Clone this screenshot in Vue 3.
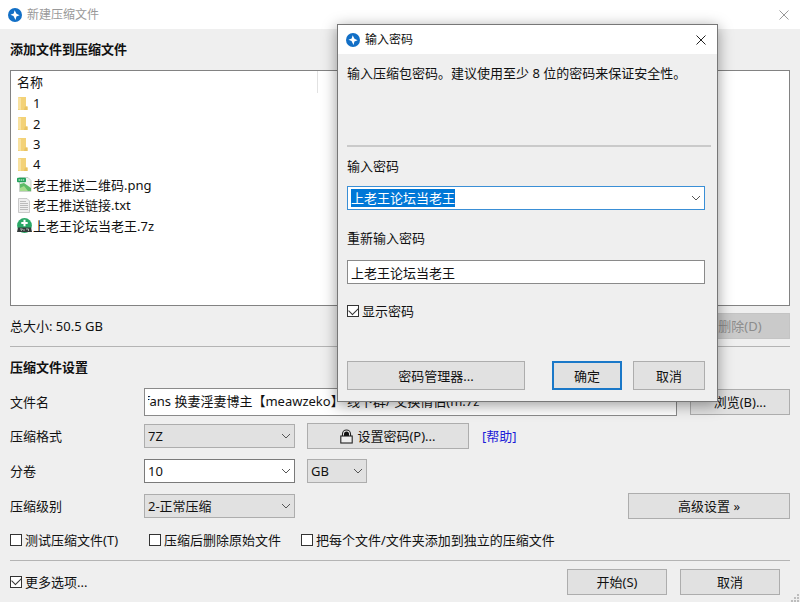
<script setup>
import { onMounted, ref } from 'vue'

const files = [
  { name: '1', kind: 'folder' },
  { name: '2', kind: 'folder' },
  { name: '3', kind: 'folder' },
  { name: '4', kind: 'folder' },
  { name: '老王推送二维码.png', kind: 'image' },
  { name: '老王推送链接.txt', kind: 'text' },
  { name: '上老王论坛当老王.7z', kind: 'archive' },
]

const fileName = ref('fans 换妻淫妻博主【meawzeko】 线下群/ 交换情侣(m.7z')
const volume = ref('10')
const password = ref('上老王论坛当老王')
const passwordAgain = ref('上老王论坛当老王')
const showPassword = ref(true)
const moreOptions = ref(true)
const passwordInput = ref(null)

onMounted(() => {
  passwordInput.value.focus()
  passwordInput.value.select()
})
</script>

<template>
  <div class="window">
    <header class="titlebar">
      <svg class="logo" viewBox="0 0 16 16" aria-hidden="true">
        <circle cx="8" cy="8" r="8" fill="#126fc6" />
        <path d="M7.600 2.500 6.500 6.300 2.800 7.600l3.500 1.600 2.300 4.500 1-4 3.700-1.500-3.600-1.700z" fill="#fff" />
      </svg>
      <span class="title">新建压缩文件</span>
      <button class="close" type="button" aria-label="关闭">
        <svg viewBox="0 0 10 10"><path d="M.5.5l9 9M9.5.5l-9 9" /></svg>
      </button>
    </header>

    <main class="content">
      <h2>添加文件到压缩文件</h2>
      <div class="list">
        <table>
          <thead>
            <tr><th>名称</th></tr>
          </thead>
          <tbody>
            <tr v-for="file in files" :key="file.name">
              <td>
                <div class="file">
                  <svg v-if="file.kind === 'folder'" viewBox="0 0 15 15" aria-hidden="true">
                    <path d="M1 1h8v9.500h1.500V14H1z" fill="#f3d278" />
                    <path d="M1 1l3 1.200V14l-3-1z" fill="#f9e2a0" />
                    <path d="M8 10.500h2.500V14H7z" fill="#e9c364" />
                  </svg>
                  <svg v-else-if="file.kind === 'image'" viewBox="0 0 15 15" aria-hidden="true">
                    <path d="M2.500.5h8.500l3 3v11H2.500z" fill="#eef3ee" stroke="#b6c2b8" stroke-width=".7" />
                    <path d="M3 7l4-1 7 5v3H3z" fill="#5dbb67" />
                    <path d="M3 11l4-2 4 5H3z" fill="#a5dc8d" />
                    <rect x="0" y=".7" width="9" height="4.600" rx="1" fill="#22a15a" />
                    <path d="M1.500 3h6" stroke="#a8e2bd" stroke-width="1.300" stroke-dasharray="1.500 .6" />
                  </svg>
                  <svg v-else-if="file.kind === 'text'" viewBox="0 0 15 15" aria-hidden="true">
                    <path d="M1.500.5h8.500l2.500 2.500v11.500h-11z" fill="#efefef" stroke="#bcbcbc" stroke-width=".8" />
                    <path d="M3 3.500h6M3 5.500h8M3 7.500h8M3 9.500h8M3 11.500h8" stroke="#b4b4b4" stroke-width=".9" />
                  </svg>
                  <svg v-else viewBox="0 0 15 15" aria-hidden="true">
                    <circle cx="7.500" cy="7.500" r="7.400" fill="#2aa866" />
                    <path d="M7.500 1.800v6.400M4.300 5h6.400" stroke="#fff" stroke-width="2" />
                    <path d="M1 9.500h13l1 4.500H0z" fill="#333b3a" />
                    <path d="M3 11h2.500L4 13M7 11v2M9 11h2.500v2" fill="none" stroke="#d0d5d2" stroke-width=".8" />
                  </svg>
                  <span>{{ file.name }}</span>
                </div>
              </td>
            </tr>
          </tbody>
        </table>
      </div>

      <div class="summary">
        <span>总大小: 50.5 GB</span>
        <button class="btn small" type="button" disabled>删除(D)</button>
      </div>

      <h2 class="ruled">压缩文件设置</h2>
      <div class="settings">
        <div class="row">
          <label for="file-name">文件名</label>
          <input id="file-name" v-model="fileName" class="field name" type="text" />
          <button class="btn small" type="button">浏览(B)...</button>
        </div>
        <div class="row">
          <label for="format">压缩格式</label>
          <div class="combo">
            <select id="format"><option>7Z</option></select>
            <svg class="arrow" viewBox="0 0 10 6"><path d="M1 1l4 4 4-4" /></svg>
          </div>
          <button class="btn wide" type="button">
            <svg class="lock" viewBox="0 0 13 15" aria-hidden="true">
              <path d="M2.500 7V5a4 4 0 0 1 8 0v2" fill="#eee" stroke="#222" stroke-width="1.100" />
              <path d="M4 7V5a2.500 2.500 0 0 1 5 0v2z" fill="#111" />
              <rect x=".8" y="7" width="11.400" height="7" fill="#eee" stroke="#222" stroke-width="1.100" />
            </svg>
            设置密码(P)...
          </button>
          <a href="#help">[帮助]</a>
        </div>
        <div class="row tall">
          <label for="volume">分卷</label>
          <div class="combo edit">
            <input id="volume" v-model="volume" type="text" />
            <svg class="arrow" viewBox="0 0 10 6"><path d="M1 1l4 4 4-4" /></svg>
          </div>
          <div class="combo unit">
            <select aria-label="单位"><option>GB</option></select>
            <svg class="arrow" viewBox="0 0 10 6"><path d="M1 1l4 4 4-4" /></svg>
          </div>
        </div>
        <div class="row">
          <label for="level">压缩级别</label>
          <div class="combo">
            <select id="level"><option>2-正常压缩</option></select>
            <svg class="arrow" viewBox="0 0 10 6"><path d="M1 1l4 4 4-4" /></svg>
          </div>
          <button class="btn wide end" type="button">高级设置 »</button>
        </div>
      </div>

      <div class="options">
        <label class="check"><input type="checkbox" />测试压缩文件(T)</label>
        <label class="check"><input type="checkbox" />压缩后删除原始文件</label>
        <label class="check"><input type="checkbox" />把每个文件/文件夹添加到独立的压缩文件</label>
      </div>

      <footer class="footer">
        <label class="check"><input v-model="moreOptions" type="checkbox" />更多选项...</label>
        <div class="actions">
          <button class="btn small" type="button">开始(S)</button>
          <button class="btn small" type="button">取消</button>
        </div>
      </footer>
    </main>

    <svg class="grip" viewBox="0 0 8 8" aria-hidden="true">
      <path d="M6 0h2v2H6zM3 3h2v2H3zM6 3h2v2H6zM0 6h2v2H0zM3 6h2v2H3zM6 6h2v2H6z" />
    </svg>

    <section class="dialog" role="dialog" aria-labelledby="dialog-title">
      <header class="titlebar">
        <svg class="logo" viewBox="0 0 16 16" aria-hidden="true">
          <circle cx="8" cy="8" r="8" fill="#126fc6" />
          <path d="M7.600 2.500 6.500 6.300 2.800 7.600l3.500 1.600 2.300 4.500 1-4 3.700-1.500-3.600-1.700z" fill="#fff" />
        </svg>
        <span id="dialog-title" class="title">输入密码</span>
        <button class="close" type="button" aria-label="关闭">
          <svg viewBox="0 0 10 10"><path d="M.5.5l9 9M9.5.5l-9 9" /></svg>
        </button>
      </header>
      <p class="message">输入压缩包密码。建议使用至少 8 位的密码来保证安全性。</p>
      <form class="form" @submit.prevent>
        <label for="password">输入密码</label>
        <div class="combo edit active">
          <input id="password" ref="passwordInput" v-model="password" type="text" />
          <svg class="arrow" viewBox="0 0 10 6"><path d="M1 1l4 4 4-4" /></svg>
        </div>
        <label for="password-again">重新输入密码</label>
        <input id="password-again" v-model="passwordAgain" class="field" type="text" />
        <label class="check"><input v-model="showPassword" type="checkbox" />显示密码</label>
        <div class="buttons">
          <button class="btn manager" type="button">密码管理器...</button>
          <button class="btn primary" type="submit">确定</button>
          <button class="btn" type="button">取消</button>
        </div>
      </form>
    </section>
  </div>
</template>

<style>
body {
  background: #efefef;
}
</style>

<style scoped>
.window,
.window * {
  box-sizing: border-box;
}
.window {
  position: relative;
  display: flex;
  flex-direction: column;
  min-height: 100vh;
  background: #efefef;
  color: #111;
  font-family: "Noto Sans", "Noto Sans CJK SC", sans-serif;
  font-size: 13px;
  line-height: 18px;
}
button,
input,
select {
  font: inherit;
  color: inherit;
  border-radius: 0;
  outline: none;
}
.titlebar {
  display: flex;
  align-items: center;
  height: 29px;
  padding: 0 11px 0 8px;
  background: #fff;
  font-size: 12px;
}
.logo {
  width: 14px;
  height: 14px;
  margin-right: 5px;
}
.title {
  flex: 1;
  color: #999;
}
.close {
  display: flex;
  padding: 0;
  border: 0;
  background: none;
}
.close svg {
  width: 10px;
  height: 10px;
  fill: none;
  stroke: #999;
}
.content {
  flex: 1;
  display: flex;
  flex-direction: column;
  padding: 0 10px;
}
h2 {
  margin: 0;
  font-size: 13px;
  font-weight: 700;
  line-height: 41px;
}
.ruled {
  border-top: 1px solid #b4b4b4;
}
.list {
  flex: 1;
  border: 1px solid #828282;
  background: #fff;
}
table {
  width: 307px;
  height: 165px;
  border-collapse: collapse;
}
th,
td {
  padding: 0 6px;
  text-align: left;
  font-weight: 400;
}
th {
  height: 22px;
  border-right: 1px solid #e2e2e2;
}
.file {
  display: flex;
  align-items: center;
  gap: 1px;
}
.file svg {
  width: 15px;
  height: 15px;
}
.summary {
  display: flex;
  align-items: center;
  justify-content: space-between;
  height: 40px;
}
.settings {
  display: flex;
  flex-direction: column;
  gap: 7px;
}
.row {
  display: flex;
  align-items: center;
  min-height: 26px;
}
.row.tall {
  min-height: 30px;
}
.row > label {
  width: 134px;
}
.row > a {
  margin-left: 13px;
  color: #1c1cd8;
  text-decoration: none;
}
.field {
  min-width: 0;
  height: 24px;
  padding: 0 3px;
  border: 1px solid #8a8a8a;
  background: #fff;
}
.name {
  flex: 1;
  height: 28px;
  padding-bottom: 4px;
  text-indent: -3px;
}
.combo {
  display: grid;
  align-items: center;
  width: 151px;
  height: 24px;
  border: 1px solid #adadad;
  background: #e1e1e1;
}
.combo > * {
  grid-area: 1 / 1;
}
.combo select,
.combo input {
  appearance: none;
  width: 100%;
  min-width: 0;
  height: 18px;
  padding: 0 20px 0 3px;
  border: 0;
  background: none;
}
.combo.edit {
  border-color: #7a7a7a;
  background: #fff;
}
.combo.unit {
  width: 60px;
  margin-left: 12px;
}
.combo.active {
  width: 100%;
  border-color: #3a8fd6;
}
.combo input::selection {
  background: #0078d7;
  color: #fff;
}
.arrow {
  justify-self: end;
  width: 10px;
  height: 6px;
  margin-right: 3px;
  fill: none;
  stroke: #555;
  pointer-events: none;
}
.btn {
  display: flex;
  align-items: center;
  justify-content: center;
  height: 26px;
  padding: 0;
  border: 1px solid #adadad;
  background: #e1e1e1;
  white-space: nowrap;
}
.btn.small {
  width: 100px;
}
.row .btn {
  margin-left: 13px;
}
.row .btn.wide {
  width: 162px;
  margin-left: 12px;
}
.row .btn.end {
  margin-left: auto;
}
.btn:disabled {
  border-color: #c4c4c4;
  background: #cacaca;
  color: #8c8c8c;
}
.lock {
  width: 13px;
  height: 15px;
  margin-right: 4px;
}
.options {
  display: flex;
  align-items: center;
  height: 41px;
}
.options .check:nth-child(1) {
  min-width: 139px;
}
.options .check:nth-child(2) {
  min-width: 152px;
}
.check {
  display: flex;
  align-items: center;
  gap: 3px;
}
.check input {
  appearance: none;
  display: grid;
  place-items: center;
  width: 12px;
  height: 12px;
  margin: 0;
  border: 1px solid #333;
  background: #fff;
}
.check input:checked::before {
  content: "";
  width: 8px;
  height: 5px;
  margin-bottom: 3px;
  border: solid #333;
  border-width: 0 0 1px 1px;
  transform: rotate(-45deg);
}
.footer {
  display: flex;
  align-items: center;
  justify-content: space-between;
  height: 42px;
  border-top: 1px solid #b4b4b4;
}
.actions {
  display: flex;
  gap: 13px;
  margin-right: 10px;
}
.grip {
  position: absolute;
  right: 1px;
  bottom: 0;
  width: 8px;
  height: 8px;
  fill: #bdbdbd;
}
.dialog {
  position: absolute;
  top: 24px;
  left: 337px;
  width: 381px;
  border: 1px solid #777;
  background: #efefef;
  box-shadow: 0 3px 14px rgba(0, 0, 0, 0.4);
}
.dialog .title {
  color: #111;
}
.dialog .close svg {
  stroke: #222;
}
.message {
  height: 93px;
  margin: 0 6px 0 9px;
  padding-top: 10px;
  border-bottom: 2px solid #cacaca;
  white-space: nowrap;
}
.form {
  display: flex;
  flex-direction: column;
  padding: 10px 12px 11px 9px;
}
.form .combo {
  margin: 11px 0 19px;
}
.form .field {
  margin: 13px 0 18px;
}
.buttons {
  display: flex;
  gap: 11px;
  margin-top: 41px;
}
.buttons .btn {
  width: 72px;
  height: 29px;
}
.buttons .manager {
  width: 178px;
  margin-right: auto;
}
.buttons .primary {
  width: 70px;
  border: 2px solid #1a78c8;
}
</style>
